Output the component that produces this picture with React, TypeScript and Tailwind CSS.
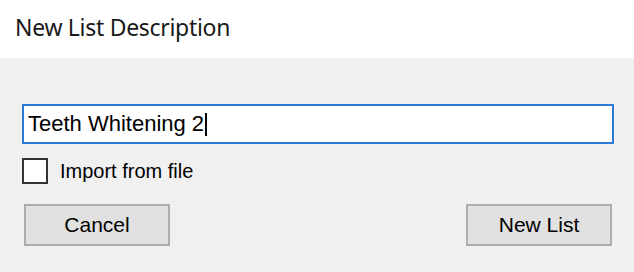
import React from "react";

export default function App() {
  return (
    <div className="w-[634px] h-[272px] flex flex-col bg-[#f0f0f0] overflow-hidden">
      <div className="h-[58px] bg-white flex items-start pl-[15px] pt-[10px] shrink-0">
        <span className="text-[23px] leading-[34px] tracking-[-0.3px] text-[#1a1a1a]" style={{ fontFamily: '"Noto Sans", "Open Sans", sans-serif' }}>
          New List Description
        </span>
      </div>
      <div className="flex-1 flex flex-col pt-[46px] pl-[22px] pr-[20px]" style={{ fontFamily: '"Liberation Sans", Arial, sans-serif' }}>
        <div className="h-[40px] border-2 border-[#2b7bd6] bg-white flex items-center pl-[4px]">
          <span className="text-[22px] leading-[26px] text-black">Teeth Whitening 2</span>
          <span className="w-[2px] h-[23px] bg-black ml-[1px]" />
        </div>
        <div className="flex items-center mt-[14px] h-[26px]">
          <div className="w-[26px] h-[26px] border-2 border-[#333333] bg-white" />
          <span className="ml-[12px] text-[20px] leading-[24px] text-black">Import from file</span>
        </div>
        <div className="flex justify-between mt-[20px] px-[2px]">
          <button className="w-[146px] h-[42px] border-2 border-[#adadad] bg-[#e1e1e1] text-[21px] text-black">Cancel</button>
          <button className="w-[146px] h-[42px] border-2 border-[#adadad] bg-[#e1e1e1] text-[21px] text-black">New List</button>
        </div>
      </div>
    </div>
  );
}
